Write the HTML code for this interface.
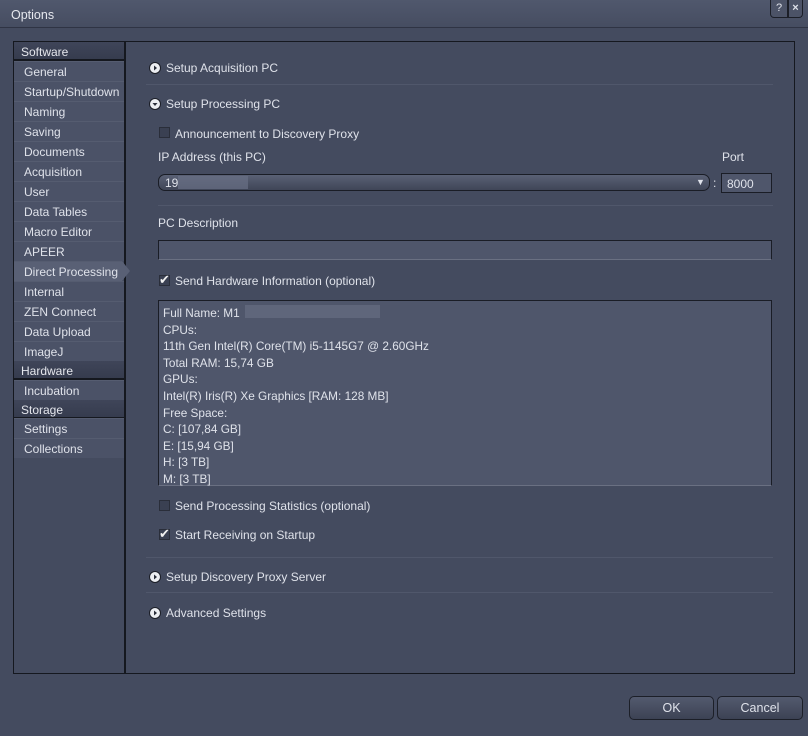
<!DOCTYPE html>
<html><head><style>
*{margin:0;padding:0;box-sizing:border-box}
body{width:808px;height:736px;background:#444b5f;font-family:"Liberation Sans",sans-serif;font-size:12px;color:#dfe2ea;position:relative;overflow:hidden}
.a{position:absolute;white-space:nowrap}
.title{left:0;top:0;width:808px;height:28px;background:linear-gradient(#50586d,#464d61);border-bottom:1px solid #2f3444}
.frame{left:13px;top:41px;width:782px;height:633px;border:1px solid #15181f;background:#444b5f}
.side{left:14px;top:42px;width:112px;height:631px;border-right:2px solid #15181f;background:#444b5f}
.hd{left:14px;width:110px;height:19px;background:linear-gradient(#3f4559,#363c4e);color:#e4e6ec;padding-left:7px;line-height:20px;font-size:12px;border-bottom:2px solid #15181f}
.it{left:14px;width:110px;height:20px;background:#4b5267;border-top:1px solid #555c70;padding-left:10px;line-height:20px;font-size:12px}
.sel{background:#596075;width:116px;clip-path:polygon(0 0,108px 0,116px 50%,108px 100%,0 100%)}
.sep{left:146px;width:627px;height:1px;background:#2f3443;border-bottom:1px solid #50576b}
.ic{width:12px;height:12px}
.cb{width:11px;height:11px;border:1px solid #2a2e3a;background:#3a4052}
.chk{font-size:13px;color:#f0f0f0;line-height:11px}
.t{font-size:12px}
.btn{height:24px;border:1px solid #1c1f28;border-radius:5px;background:linear-gradient(#535a6e,#3c4254);text-align:center;line-height:22px;font-size:12.5px}
</style></head><body>
<div class="a title"></div>
<div class="a" style="left:11px;top:8px;font-size:12.5px;color:#e6e8ee">Options</div>
<div class="a" style="left:770px;top:0;width:18px;height:18px;border:1px solid #1c1f28;border-top:none;border-radius:0 0 0 4px;background:#4c5367;text-align:center;font-size:11px;line-height:16px">?</div>
<div class="a" style="left:788px;top:0;width:15px;height:18px;border:1px solid #1c1f28;border-top:none;border-radius:0 0 4px 0;background:#4c5367;text-align:center;font-size:11px;font-weight:bold;line-height:16px">×</div>
<div class="a frame"></div>
<div class="a side"></div>
<div class="a hd" style="top:42px">Software</div>
<div class="a it" style="top:61px">General</div>
<div class="a it" style="top:81px">Startup/Shutdown</div>
<div class="a it" style="top:101px">Naming</div>
<div class="a it" style="top:121px">Saving</div>
<div class="a it" style="top:141px">Documents</div>
<div class="a it" style="top:161px">Acquisition</div>
<div class="a it" style="top:181px">User</div>
<div class="a it" style="top:201px">Data Tables</div>
<div class="a it" style="top:221px">Macro Editor</div>
<div class="a it" style="top:241px">APEER</div>
<div class="a it sel" style="top:261px">Direct Processing</div>
<div class="a it" style="top:281px">Internal</div>
<div class="a it" style="top:301px">ZEN Connect</div>
<div class="a it" style="top:321px">Data Upload</div>
<div class="a it" style="top:341px">ImageJ</div>
<div class="a hd" style="top:361px">Hardware</div>
<div class="a it" style="top:380px">Incubation</div>
<div class="a hd" style="top:400px">Storage</div>
<div class="a it" style="top:418px">Settings</div>
<div class="a it" style="top:438px">Collections</div>

<svg class="a ic" style="left:149px;top:62px" viewBox="0 0 12 12"><circle cx="6" cy="6" r="5.5" fill="#eceef2" stroke="#1c1f28"/><path d="M5 3.5L8 6L5 8.5Z" fill="#2a2e3a"/></svg>
<div class="a t" style="left:166px;top:61px">Setup Acquisition PC</div>
<div class="a sep" style="top:84px"></div>
<svg class="a ic" style="left:149px;top:98px" viewBox="0 0 12 12"><circle cx="6" cy="6" r="5.5" fill="#eceef2" stroke="#1c1f28"/><path d="M3.5 5L8.5 5L6 8Z" fill="#2a2e3a"/></svg>
<div class="a t" style="left:166px;top:97px">Setup Processing PC</div>
<div class="a cb" style="left:159px;top:127px"></div><div class="a t" style="left:175px;top:127px">Announcement to Discovery Proxy</div>
<div class="a t" style="left:158px;top:150px">IP Address (this PC)</div>
<div class="a t" style="left:722px;top:150px">Port</div>
<div class="a" style="left:158px;top:174px;width:552px;height:17px;border:1px solid #1a1d26;border-radius:7px;background:linear-gradient(#5a6175,#3f4557)"></div>
<div class="a" style="left:165px;top:176px">19</div>
<div class="a" style="left:178px;top:176px;width:70px;height:13px;background:#6a7186;opacity:.7"></div>
<div class="a" style="left:696px;top:177px;font-size:9px">▼</div>
<div class="a" style="left:713px;top:176px">:</div>
<div class="a" style="left:721px;top:173px;width:51px;height:20px;border:1px solid #1a1d26;background:#4f566b;padding:3px 5px">8000</div>
<div class="a sep" style="top:205px;left:158px;width:615px"></div>
<div class="a t" style="left:158px;top:216px">PC Description</div>
<div class="a" style="left:158px;top:240px;width:614px;height:20px;border:1px solid #1a1d26;border-bottom-color:#6a7082;background:#4f566b"></div>
<div class="a cb" style="left:159px;top:275px"></div><div class="a chk" style="left:159px;top:274px">✔</div><div class="a t" style="left:175px;top:274px">Send Hardware Information (optional)</div>
<div class="a" style="left:158px;top:300px;width:614px;height:186px;border:1px solid #1a1d26;border-bottom-color:#6a7082;background:#4f566b;padding:4px 4px;line-height:16.6px;white-space:pre;font-size:11.8px">Full Name: M1
CPUs:
11th Gen Intel(R) Core(TM) i5-1145G7 @ 2.60GHz
Total RAM: 15,74 GB
GPUs:
Intel(R) Iris(R) Xe Graphics [RAM: 128 MB]
Free Space:
C: [107,84 GB]
E: [15,94 GB]
H: [3 TB]
M: [3 TB]</div>
<div class="a" style="left:245px;top:305px;width:135px;height:13px;background:#6b7286;opacity:.6"></div>
<div class="a cb" style="left:159px;top:500px"></div><div class="a t" style="left:175px;top:499px">Send Processing Statistics (optional)</div>
<div class="a cb" style="left:159px;top:529px"></div><div class="a chk" style="left:159px;top:528px">✔</div><div class="a t" style="left:175px;top:528px">Start Receiving on Startup</div>
<div class="a sep" style="top:557px"></div>
<svg class="a ic" style="left:149px;top:571px" viewBox="0 0 12 12"><circle cx="6" cy="6" r="5.5" fill="#eceef2" stroke="#1c1f28"/><path d="M5 3.5L8 6L5 8.5Z" fill="#2a2e3a"/></svg>
<div class="a t" style="left:166px;top:570px">Setup Discovery Proxy Server</div>
<div class="a sep" style="top:592px"></div>
<svg class="a ic" style="left:149px;top:607px" viewBox="0 0 12 12"><circle cx="6" cy="6" r="5.5" fill="#eceef2" stroke="#1c1f28"/><path d="M5 3.5L8 6L5 8.5Z" fill="#2a2e3a"/></svg>
<div class="a t" style="left:166px;top:606px">Advanced Settings</div>

<div class="a btn" style="left:629px;top:696px;width:85px">OK</div>
<div class="a btn" style="left:717px;top:696px;width:86px">Cancel</div>
</body></html>
